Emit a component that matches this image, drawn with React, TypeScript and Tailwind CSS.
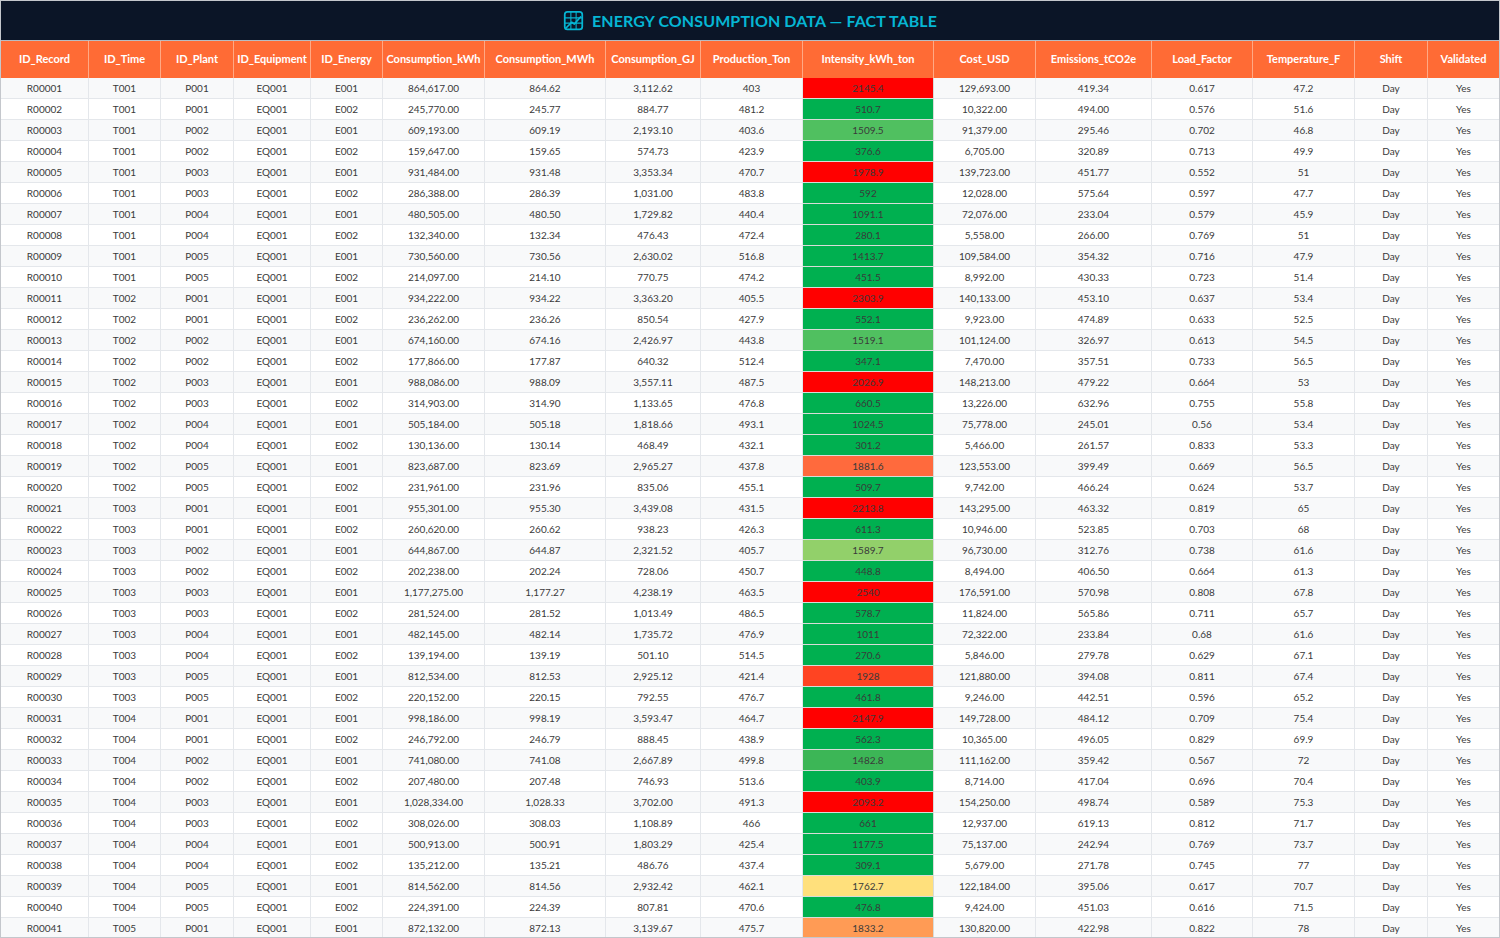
import React from "react";

const columns = [
  "ID_Record",
  "ID_Time",
  "ID_Plant",
  "ID_Equipment",
  "ID_Energy",
  "Consumption_kWh",
  "Consumption_MWh",
  "Consumption_GJ",
  "Production_Ton",
  "Intensity_kWh_ton",
  "Cost_USD",
  "Emissions_tCO2e",
  "Load_Factor",
  "Temperature_F",
  "Shift",
  "Validated",
];

// kWh, MWh, GJ, ton, intensity, cost, emissions, load, temp
const rows: string[][] = [
  ["864,617.00", "864.62", "3,112.62", "403", "2145.4", "129,693.00", "419.34", "0.617", "47.2"],
  ["245,770.00", "245.77", "884.77", "481.2", "510.7", "10,322.00", "494.00", "0.576", "51.6"],
  ["609,193.00", "609.19", "2,193.10", "403.6", "1509.5", "91,379.00", "295.46", "0.702", "46.8"],
  ["159,647.00", "159.65", "574.73", "423.9", "376.6", "6,705.00", "320.89", "0.713", "49.9"],
  ["931,484.00", "931.48", "3,353.34", "470.7", "1978.9", "139,723.00", "451.77", "0.552", "51"],
  ["286,388.00", "286.39", "1,031.00", "483.8", "592", "12,028.00", "575.64", "0.597", "47.7"],
  ["480,505.00", "480.50", "1,729.82", "440.4", "1091.1", "72,076.00", "233.04", "0.579", "45.9"],
  ["132,340.00", "132.34", "476.43", "472.4", "280.1", "5,558.00", "266.00", "0.769", "51"],
  ["730,560.00", "730.56", "2,630.02", "516.8", "1413.7", "109,584.00", "354.32", "0.716", "47.9"],
  ["214,097.00", "214.10", "770.75", "474.2", "451.5", "8,992.00", "430.33", "0.723", "51.4"],
  ["934,222.00", "934.22", "3,363.20", "405.5", "2303.9", "140,133.00", "453.10", "0.637", "53.4"],
  ["236,262.00", "236.26", "850.54", "427.9", "552.1", "9,923.00", "474.89", "0.633", "52.5"],
  ["674,160.00", "674.16", "2,426.97", "443.8", "1519.1", "101,124.00", "326.97", "0.613", "54.5"],
  ["177,866.00", "177.87", "640.32", "512.4", "347.1", "7,470.00", "357.51", "0.733", "56.5"],
  ["988,086.00", "988.09", "3,557.11", "487.5", "2026.9", "148,213.00", "479.22", "0.664", "53"],
  ["314,903.00", "314.90", "1,133.65", "476.8", "660.5", "13,226.00", "632.96", "0.755", "55.8"],
  ["505,184.00", "505.18", "1,818.66", "493.1", "1024.5", "75,778.00", "245.01", "0.56", "53.4"],
  ["130,136.00", "130.14", "468.49", "432.1", "301.2", "5,466.00", "261.57", "0.833", "53.3"],
  ["823,687.00", "823.69", "2,965.27", "437.8", "1881.6", "123,553.00", "399.49", "0.669", "56.5"],
  ["231,961.00", "231.96", "835.06", "455.1", "509.7", "9,742.00", "466.24", "0.624", "53.7"],
  ["955,301.00", "955.30", "3,439.08", "431.5", "2213.8", "143,295.00", "463.32", "0.819", "65"],
  ["260,620.00", "260.62", "938.23", "426.3", "611.3", "10,946.00", "523.85", "0.703", "68"],
  ["644,867.00", "644.87", "2,321.52", "405.7", "1589.7", "96,730.00", "312.76", "0.738", "61.6"],
  ["202,238.00", "202.24", "728.06", "450.7", "448.8", "8,494.00", "406.50", "0.664", "61.3"],
  ["1,177,275.00", "1,177.27", "4,238.19", "463.5", "2540", "176,591.00", "570.98", "0.808", "67.8"],
  ["281,524.00", "281.52", "1,013.49", "486.5", "578.7", "11,824.00", "565.86", "0.711", "65.7"],
  ["482,145.00", "482.14", "1,735.72", "476.9", "1011", "72,322.00", "233.84", "0.68", "61.6"],
  ["139,194.00", "139.19", "501.10", "514.5", "270.6", "5,846.00", "279.78", "0.629", "67.1"],
  ["812,534.00", "812.53", "2,925.12", "421.4", "1928", "121,880.00", "394.08", "0.811", "67.4"],
  ["220,152.00", "220.15", "792.55", "476.7", "461.8", "9,246.00", "442.51", "0.596", "65.2"],
  ["998,186.00", "998.19", "3,593.47", "464.7", "2147.9", "149,728.00", "484.12", "0.709", "75.4"],
  ["246,792.00", "246.79", "888.45", "438.9", "562.3", "10,365.00", "496.05", "0.829", "69.9"],
  ["741,080.00", "741.08", "2,667.89", "499.8", "1482.8", "111,162.00", "359.42", "0.567", "72"],
  ["207,480.00", "207.48", "746.93", "513.6", "403.9", "8,714.00", "417.04", "0.696", "70.4"],
  ["1,028,334.00", "1,028.33", "3,702.00", "491.3", "2093.2", "154,250.00", "498.74", "0.589", "75.3"],
  ["308,026.00", "308.03", "1,108.89", "466", "661", "12,937.00", "619.13", "0.812", "71.7"],
  ["500,913.00", "500.91", "1,803.29", "425.4", "1177.5", "75,137.00", "242.94", "0.769", "73.7"],
  ["135,212.00", "135.21", "486.76", "437.4", "309.1", "5,679.00", "271.78", "0.745", "77"],
  ["814,562.00", "814.56", "2,932.42", "462.1", "1762.7", "122,184.00", "395.06", "0.617", "70.7"],
  ["224,391.00", "224.39", "807.81", "470.6", "476.8", "9,424.00", "451.03", "0.616", "71.5"],
  ["872,132.00", "872.13", "3,139.67", "475.7", "1833.2", "130,820.00", "422.98", "0.822", "78"],
];

const grid =
  "grid grid-cols-[88px_72px_73px_77px_72px_102px_121px_95px_102px_131px_102px_116px_101px_102px_73px_72px]";

function intensityBg(v: number) {
  if (v >= 1950) return "bg-[#ff0000]";
  if (v >= 1900) return "bg-[#ff4422]";
  if (v >= 1860) return "bg-[#ff6a3d]";
  if (v >= 1800) return "bg-[#ff9b55]";
  if (v >= 1700) return "bg-[#ffe07c]";
  if (v >= 1550) return "bg-[#92d06a]";
  if (v >= 1500) return "bg-[#50c060]";
  if (v >= 1450) return "bg-[#3cb656]";
  return "bg-[#00b050]";
}

function ChartIcon() {
  return (
    <svg width="21" height="21" viewBox="0 0 24 24" fill="none" stroke="#06b6d4" strokeWidth="2" strokeLinecap="round" strokeLinejoin="round">
      <rect x="2" y="2" width="20" height="20" rx="3" />
      <path d="M9 2v20M15 2v20M2 9h20M2 15h20" strokeWidth="1.2" />
      <path d="M4 20l6-6 3 2 7-8" strokeWidth="2" />
    </svg>
  );
}

export default function App() {
  return (
    <div className="w-[1500px] h-[938px] overflow-hidden bg-white border border-[#c4c7cc] font-['Lato','Noto_Sans',sans-serif]">
      {/* Title */}
      <div className="h-[40px] bg-[#0b1527] border-b border-[#b8bcc2] flex items-center justify-center gap-2">
        <ChartIcon />
        <h1 className="text-[16px] font-bold text-[#06b6d4] tracking-[0.1px]">ENERGY CONSUMPTION DATA — FACT TABLE</h1>
      </div>

      {/* Header row */}
      <div className={`${grid} h-[37px] bg-[#ff6b35]`}>
        {columns.map((c) => (
          <div key={c} className="flex items-center justify-center border-r border-[#ffa985] text-white font-bold text-[11px] whitespace-nowrap">
            {c}
          </div>
        ))}
      </div>

      {/* Body */}
      {rows.map((r, i) => {
        const n = i + 1;
        const ids = [
          "R" + String(n).padStart(5, "0"),
          "T00" + (Math.floor(i / 10) + 1),
          "P00" + (Math.floor((i % 10) / 2) + 1),
          "EQ001",
          i % 2 === 0 ? "E001" : "E002",
        ];
        const cells = [...ids, ...r, "Day", "Yes"];
        return (
          <div key={n} className={`${grid} h-[21px] ${i % 2 === 0 ? "bg-[#f8f9fa]" : "bg-white"}`}>
            {cells.map((v, j) => (
              <div
                key={j}
                className={`flex items-center justify-center border-r border-b whitespace-nowrap text-[10px] text-[#3a3a3a] ${
                  j === 9 ? `${intensityBg(parseFloat(v))} border-[#d8dcd8]` : "border-[#e4e7eb]"
                }`}
              >
                {v}
              </div>
            ))}
          </div>
        );
      })}
    </div>
  );
}
